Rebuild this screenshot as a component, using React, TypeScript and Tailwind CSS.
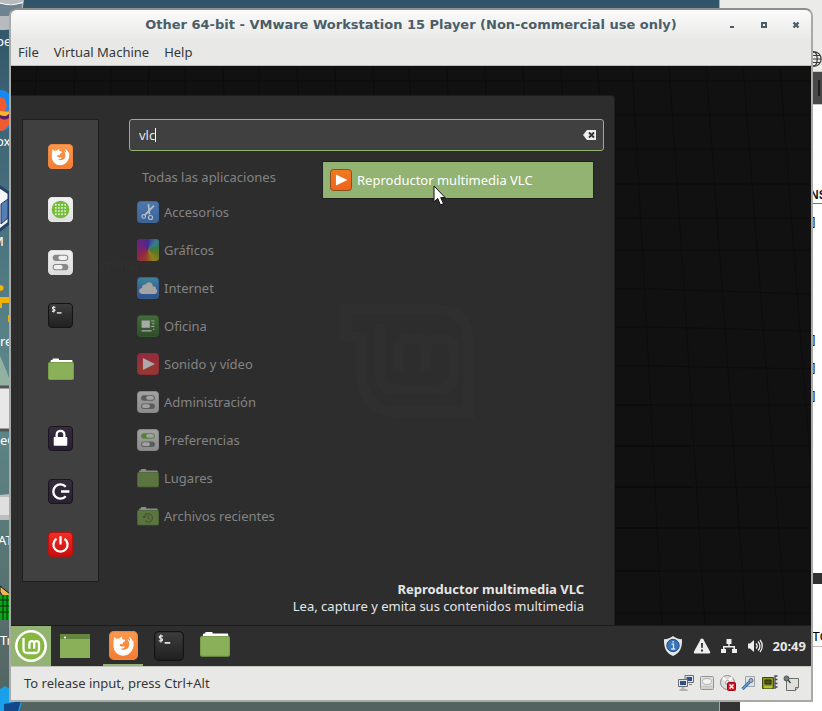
import type { ReactNode } from "react";

const uiFont = "font-['Noto_Sans',sans-serif]";

/* ---------- application icons ---------- */

type IconProps = { className?: string };

function Tile({ id, from, to, stroke, className, children }: { id: string; from: string; to: string; stroke: string; className?: string; children: ReactNode }) {
  return (
    <svg viewBox="0 0 24 24" className={className ?? "size-[25px]"} aria-hidden="true">
      <defs>
        <linearGradient id={id} x1="0" y1="0" x2="0" y2="1">
          <stop offset="0" stopColor={from} />
          <stop offset="1" stopColor={to} />
        </linearGradient>
      </defs>
      <rect x=".5" y=".5" width="23" height="23" rx="3.5" fill={`url(#${id})`} stroke={stroke} />
      {children}
    </svg>
  );
}

function Firefox({ className }: IconProps) {
  return (
    <Tile id="ffx" from="#fb9a4f" to="#f47c31" stroke="#ee8541" className={className}>
      <path
        d="M4.600 4.800L6 6.600C6.800 6.200 7.800 6.100 8.600 6.400 9.200 5.500 10 4.900 11 4.600 10.600 5.500 10.700 6.500 11.400 7L13.200 7.300C13.500 8.200 12.700 8.800 11.600 9.400L11.300 10.900 9.600 10.600C8.700 10.900 8.600 11.800 9.400 12.500 10.500 13.300 11.800 12.500 13.200 13.100 12.300 14.600 10.700 15 9.300 14.600 11.500 16.300 14.700 15.700 16.100 13.500 17.300 11.500 16.900 8.600 15.200 6.600 16.200 7 16.900 7.600 17.400 8.400 17.500 6.800 17 5.600 16.200 4.600 18 5.500 19 6.800 19.500 8.400L19.900 7.500C21.800 13.600 18.200 20.400 12 20.400 7.200 20.400 3.700 16.800 3.700 12.200 3.700 9.500 3.900 6.900 4.600 4.800Z"
        fill="#fff"
      />
    </Tile>
  );
}

function SoftwareGrid({ className }: IconProps) {
  return (
    <Tile id="soft" from="#f3f3f3" to="#dfdfdf" stroke="#e8e8e8" className={className}>
      <circle cx="12" cy="12" r="8.500" fill="#74bd3b" />
      {[7.5, 10.5, 13.5, 16.5].map((x) =>
        [7.5, 10.5, 13.5, 16.5].map((y) => <rect key={`${x}-${y}`} x={x - 0.8} y={y - 0.8} width="1.600" height="1.600" fill="#e6f5d7" />),
      )}
    </Tile>
  );
}

function Toggles({ className, id, from, to, pill, top }: { className?: string; id: string; from: string; to: string; pill: string; top: string }) {
  return (
    <Tile id={id} from={from} to={to} stroke={to} className={className}>
      <rect x="4.500" y="4.500" width="15" height="6" rx="3" fill={top} />
      <rect x="10" y="5.500" width="8.500" height="4" rx="2" fill={from} />
      <rect x="4.500" y="13.500" width="15" height="6" rx="3" fill={pill} />
      <rect x="5.500" y="14.500" width="8.500" height="4" rx="2" fill={from} />
    </Tile>
  );
}

function Terminal({ className }: IconProps) {
  return (
    <Tile id="term" from="#3d3d3d" to="#202020" stroke="#141414" className={className}>
      <path d="M5.500 2.800v6.400M7.200 4.100c-3.600-1-3.600 1.700-1.700 1.900 2 .3 1.800 2.700-1.700 1.800" fill="none" stroke="#e8e8e8" strokeWidth="1" />
      <path d="M8.500 9.500h4.500" stroke="#fff" strokeWidth="1.200" />
    </Tile>
  );
}

function Folder({ className, dim, recent }: { className?: string; dim?: boolean; recent?: boolean }) {
  return (
    <svg viewBox="0 0 26 24" className={className ?? "h-6 w-[26px]"} aria-hidden="true">
      <path d="M2.500 6V4.200C2.500 3.500 3 3 3.700 3H4.500V2.500c0-.6.4-1 1-1H10c.6 0 1 .4 1 1V3h12.500c.6 0 1 .4 1 1V7H2.500z" fill={dim ? "#8a8a8a" : "#fff"} />
      <rect x=".5" y="5.500" width="25" height="17" rx="1.200" fill={dim ? "#5b7440" : "#8bb05a"} stroke={dim ? "#4d6536" : "#7a9f4c"} />
      {recent && (
        <g fill="none" stroke="#425730" strokeWidth="1.300">
          <path d="M8.300 13.500a5 5 0 1 1 1.200 4M6.500 12l1.800 2 2-1.600M13 11.500v3l2.300 1.200" />
        </g>
      )}
    </svg>
  );
}

function Lock() {
  return (
    <Tile id="lock" from="#352d3d" to="#292131" stroke="#1a151f">
      <rect x="5.500" y="10.500" width="13" height="8.500" rx=".8" fill="#fff" />
      <path d="M8.300 11V8.300a3.700 3.700 0 0 1 7.400 0V11" fill="none" stroke="#fff" strokeWidth="2.200" />
    </Tile>
  );
}

function Logout() {
  return (
    <Tile id="logout" from="#352d3d" to="#292131" stroke="#1a151f">
      <path d="M17 7.500a6.800 6.800 0 1 0 0 9M12.500 12H20.500" fill="none" stroke="#fff" strokeWidth="2.300" />
    </Tile>
  );
}

function Power() {
  return (
    <Tile id="power" from="#ef3128" to="#cb0b0b" stroke="#bd1111">
      <path d="M8.200 6.500a6.800 6.800 0 1 0 7.600 0M12 4v8" fill="none" stroke="#fff" strokeWidth="2.200" />
    </Tile>
  );
}

function Scissors() {
  return (
    <Tile id="acc" from="#4c78ae" to="#3c6397" stroke="#41699c" className="size-[22px]">
      <g fill="none" stroke="#b5bcc4" strokeWidth="1.300">
        <path d="M12.500 3.500L13.600 14.500M18.500 5L8.500 15.500" strokeWidth="1.900" />
        <circle cx="7.300" cy="16.800" r="2" />
        <circle cx="14.800" cy="18" r="2.200" />
      </g>
    </Tile>
  );
}

function Graphics() {
  return (
    <span
      className="block size-[22px] rounded-[3px] bg-[conic-gradient(from_0deg,#432b8c,#377c92_12%,#397a42_22%,#667722_32%,#92801d_42%,#963b28_54%,#8b244e_68%,#6b2480_86%,#432b8c)]"
      aria-hidden="true"
    />
  );
}

function Cloud() {
  return (
    <Tile id="net" from="#3e8398" to="#314d91" stroke="#386493" className="size-[22px]">
      <path d="M6 18.500c-4.700 0-4.700-6.200-.5-6.500-.4-3 1.800-4.300 4-3.700 1.600-4.500 8-2.800 7.700 1.700 2.400-.1 3.700 1.200 3.500 2.700 2.300 1.600 1.600 5.800-2 5.800z" fill="#a4a4a4" />
    </Tile>
  );
}

function Office() {
  return (
    <Tile id="office" from="#416c39" to="#304c2a" stroke="#365a2f" className="size-[22px]">
      <path d="M5 6h9v8H5zM5 16.500h11V18H5zM15.500 6H19v1.200h-3.500zM16.500 9H19v1.200h-2.500zM15.500 12H19v1.200h-3.500zM17.500 15H19v1.200h-1.500z" fill="#aaa" />
    </Tile>
  );
}

function Media() {
  return (
    <Tile id="media" from="#97293f" to="#953a2c" stroke="#912f39" className="size-[22px]">
      <path d="M6.500 5.500l13 6.500-13 6.500z" fill="#aaa" />
    </Tile>
  );
}

function Vlc() {
  return (
    <Tile id="vlc" from="#ef7b21" to="#ee631a" stroke="#82451b" className="size-[22px]">
      <path d="M6.500 6l12.500 6-12.500 6z" fill="#fff" />
    </Tile>
  );
}

function MintLogo() {
  return (
    <svg viewBox="0 0 32 32" className="size-8" aria-hidden="true">
      <circle cx="16" cy="16" r="16" fill="#fff" />
      <circle cx="16" cy="16" r="13.400" fill="#86b83f" />
      <path d="M8.500 8v11c0 2.600 1.400 4 4 4h7.500c2.600 0 4-1.400 4-4v-5.200c0-1.600-1-2.600-2.400-2.600s-2.400 1-2.400 2.600v5v-5c0-1.600-1-2.600-2.400-2.600s-2.400 1-2.400 2.600v5" fill="none" stroke="#fff" strokeWidth="2.300" />
    </svg>
  );
}

function ShowDesktop() {
  return (
    <svg viewBox="0 0 30 24" className="h-6 w-[30px]" aria-hidden="true">
      <rect width="30" height="24" fill="#8bb05a" />
      <rect width="30" height="5" fill="#64863f" />
      <circle cx="5" cy="3.500" r="1.100" fill="#fff" />
    </svg>
  );
}

/* ---------- tray and status icons ---------- */

function Shield() {
  return (
    <svg viewBox="0 0 20 22" className="h-[22px] w-5" aria-hidden="true">
      <path d="M10 1c2.400 2 5.200 3 9 3.200C19.300 12 17.300 18 10 21 2.700 18 .7 12 1 4.200 4.800 4 7.600 3 10 1z" fill="#e4e7e9" />
      <circle cx="10" cy="10.500" r="6.200" fill="#3874b8" stroke="#234f86" />
      <path d="M8.500 9.200h2v4.600M8.200 14h4M9.200 6.800h1.800" fill="none" stroke="#d2e6f8" strokeWidth="1.300" />
    </svg>
  );
}

function Warning() {
  return (
    <svg viewBox="0 0 18 16" className="h-4 w-[18px]" aria-hidden="true">
      <path d="M9 .5c.6 0 1 .3 1.300.8l6.800 12.500c.4.9 0 1.700-1 1.700H1.900c-1 0-1.400-.8-1-1.700L7.700 1.300C8 .8 8.400.500 9 .5z" fill="#eee" />
      <path d="M8 5h2l-.3 5H8.300zM8 11.500h2v2H8z" fill="#303030" />
    </svg>
  );
}

function Network() {
  return (
    <svg viewBox="0 0 16 16" className="size-4" aria-hidden="true">
      <path d="M5.500 1h5v5H8.700v2H14v3h2v4h-5v-4h1.500V9.500h-9V11H5v4H0v-4h2V8h5.300V6H5.500z" fill="#eee" />
    </svg>
  );
}

function Volume() {
  return (
    <svg viewBox="0 0 16 16" className="size-4" aria-hidden="true">
      <path d="M1 5.500h2L7 2v12l-4-3.500H1z" fill="#eee" />
      <path d="M9 5.500c1.400 1.500 1.400 3.500 0 5M11 3.500c2.600 2.600 2.600 6.400 0 9M13 2c3 3.500 3 8.500 0 12" fill="none" stroke="#eee" strokeWidth="1.300" />
    </svg>
  );
}

function Monitors() {
  return (
    <svg viewBox="0 0 16 16" className="size-4" aria-hidden="true">
      <path d="M7 .5h8.500v7H7z" fill="#e2e4e6" stroke="#6a6e74" />
      <path d="M8.500 2H14v4H8.500z" fill="#2f4f86" />
      <path d="M.5 4.500h9v7h-9z" fill="#e2e4e6" stroke="#6a6e74" />
      <path d="M2 6h6v4H2z" fill="#2f4f86" />
      <path d="M11 9.500h3M3.500 13h3M1.500 15h8" fill="none" stroke="#7c8085" strokeWidth="1.200" />
    </svg>
  );
}

function HardDisk() {
  return (
    <svg viewBox="0 0 16 16" className="size-4" aria-hidden="true">
      <rect x="1.500" y="1.500" width="13" height="13" rx="1" fill="#dededb" stroke="#93948f" />
      <ellipse cx="8" cy="6.500" rx="4.500" ry="3" fill="#f2f2f0" stroke="#b3b3ae" />
      <path d="M2.500 11.500h11M2.500 13h11" stroke="#c4c4be" />
    </svg>
  );
}

function DiscError() {
  return (
    <svg viewBox="0 0 16 16" className="size-4" aria-hidden="true">
      <circle cx="7.500" cy="7.500" r="7" fill="#dcdcda" stroke="#8b8b8b" />
      <path d="M7.500 7.500L3 2.500M7.500 7.500L12 2" stroke="#fff" strokeWidth="2" />
      <circle cx="7.500" cy="7.500" r="2" fill="#fff" stroke="#999" />
      <rect x="7.500" y="7.500" width="8" height="8" rx="1" fill="#cf1524" stroke="#a00914" />
      <path d="M9.500 9.500l4 4M13.500 9.500l-4 4" stroke="#fff" strokeWidth="1.500" />
    </svg>
  );
}

function Usb() {
  return (
    <svg viewBox="0 0 16 16" className="size-4" aria-hidden="true">
      <path d="M4.500 1.500h9v10h-9z" fill="#dfe3e7" stroke="#9fa5aa" />
      <circle cx="10" cy="5.500" r="2" fill="#9eb3cc" stroke="#5b6f88" />
      <path d="M1.500 14l7-7" stroke="#2c5c9b" strokeWidth="3" />
      <path d="M1.500 14l7-7" stroke="#6ca1db" strokeWidth="1.500" />
    </svg>
  );
}

function SoundCard() {
  return (
    <svg viewBox="0 0 16 16" className="size-4" aria-hidden="true">
      <path d="M.5 2.500h11v11H.5z" fill="#8c981c" stroke="#404915" />
      <path d="M3 5h6v4H3z" fill="#4a5320" stroke="#252b12" />
      <path d="M3 11v2.500M5 11v2.500M7 11v2.500M9 11v2.500" stroke="#dce94c" />
      <path d="M15.500 1H13v13M13 4.500h2.500M13 8.500h2.500M13 12h2.500" fill="none" stroke="#45484a" strokeWidth="1.300" />
    </svg>
  );
}

function Note() {
  return (
    <svg viewBox="0 0 16 16" className="size-4" aria-hidden="true">
      <path d="M3.500 3.500h12v9l-3 3h-9z" fill="#dfe0dc" stroke="#6b6e69" />
      <path d="M12.500 15.500v-3h3" fill="#bbbdb8" stroke="#6b6e69" />
      <circle cx="3.500" cy="3.500" r="2.500" fill="#737b7c" stroke="#4c5352" />
      <path d="M5 5l2.500 3" stroke="#434948" strokeWidth="1.500" />
    </svg>
  );
}

/* ---------- host desktop behind the window ---------- */

function HostDesktop() {
  return (
    <div className="absolute inset-0 overflow-hidden bg-linear-to-b from-[#315469] via-[#5e898c] via-55% to-[#53635f]" aria-hidden="true">
      <svg className="absolute top-0 left-0 h-[711px] w-6" viewBox="0 0 24 711">
        <path d="M0 0h24l-4 26c-1 3-8 4-20 4z" fill="#b7bbbd" />
        <path d="M0 4h22l-1 12H0z" fill="#6e8290" />
        <path d="M0 3q12 4 23-1" stroke="#fff" fill="none" />
        <path d="M0 90c8-1 13 7 14 20s-5 21-14 21z" fill="#1788ec" />
        <path d="M0 97l5 2 2 8-3 5 6-2v12c-2 6-6 9-10 9z" fill="#f05a31" />
        <path d="M0 111l10 1-3 5H0z" fill="#fbb52b" />
        <path d="M0 115c4 2 7 1 9-1v4c-3 2-6 2-9 0z" fill="#56206e" />
        <path d="M-6 194l6-7 9 6v30l-9 7-7-4z" fill="#f3f5f6" stroke="#24416c" strokeWidth="3" />
        <path d="M1 204l7-5v19l-7 6z" fill="#557eb6" stroke="#203963" />
        <path d="M0 285c5 0 5 6 0 6zM0 297h9v6H2v5H0zM8 315h4v7H8z" fill="#f3b006" />
        <path d="M0 356q7 15 12 30H0z" fill="#92b1a1" />
        <path d="M-4 387h18v43H-4z" fill="#e8e8e8" stroke="#505457" strokeWidth="3" />
        <path d="M0 495l10-1v26H0z" fill="#bdbdbd" />
        <path d="M0 497h9v18H0z" fill="#dfdfdf" />
        <path d="M0 586l10 8v12L0 592z" fill="#edb84c" stroke="#111" />
        <path d="M0 595h10v25H0z" fill="#09a714" />
        <path d="M3 595v25M7 595v25M0 600h10M0 606h10M0 612h10" stroke="#102716" />
        <path d="M0 689l5-3 5 3v10l12 4-3 8H0z" fill="#1aa0e9" />
        <path d="M4 704l17-3-3 10H4z" fill="#12488a" />
      </svg>
      <div className="absolute top-0 left-0 w-2.5 overflow-hidden text-[13px] leading-4 text-white">
        <div className="-ml-1 flex flex-col">
          <span className="mt-[33px]">pe</span>
          <span className="mt-[84px]">ox</span>
          <span className="mt-[84px] -ml-1">M</span>
          <span className="mt-[84px] ml-1">re</span>
          <span className="mt-[83px] ml-1">eC</span>
          <span className="mt-[84px] ml-0.5">AT</span>
          <span className="mt-[84px] ml-1">Tr</span>
        </div>
      </div>
      <div className="absolute inset-y-0 right-0 flex w-[103px] flex-col border-l border-[#a2aaae] bg-white">
        <div className="h-[71px] bg-[#ebebea]">
          <svg className="absolute top-[51px] right-0 size-4" viewBox="0 0 16 16">
            <g fill="none" stroke="#3b3b3b" strokeWidth="1.200">
              <circle cx="8" cy="8" r="7.200" />
              <ellipse cx="8" cy="8" rx="3.200" ry="7.200" />
              <path d="M1 8h14M2 4.500h12M2 11.500h12" />
            </g>
          </svg>
        </div>
        <div className="flex h-[34px] justify-end border-y border-[#c8c8c8] bg-[#484848] py-2 pr-0.5">
          <span className="w-0.5 bg-[#202020]" />
        </div>
        <div className="flex h-[468px] flex-col items-end overflow-hidden font-['DejaVu_Sans_Mono',monospace] text-[12px] leading-4 text-[#151515]">
          <span className="mt-[82px] w-3 overflow-hidden border-b border-[#777] font-['Liberation_Sans',sans-serif] font-bold">NS</span>
          <span className="mt-[11px] w-3">]</span>
          <span className="mt-[102px] w-3">]</span>
          <span className="mt-3 w-3">]</span>
          <span className="mt-3 w-3">]</span>
        </div>
        <div className="h-[11px] bg-[#303030]" />
        <div className="flex h-[63px] justify-end border-b border-[#bbb]">
          <span className="mt-[45px] w-2.5 overflow-hidden font-['Liberation_Sans',sans-serif] text-[13px] leading-4">TO</span>
        </div>
        <div className="flex flex-1 items-end">
          <span className="h-3 w-5 bg-[#333]" />
        </div>
      </div>
    </div>
  );
}

/* ---------- guest wallpaper ---------- */

function Wallpaper() {
  return (
    <svg className="absolute inset-0 size-full" viewBox="0 0 800 600" preserveAspectRatio="none" aria-hidden="true">
      <rect width="800" height="600" fill="#111" />
      <g stroke="#0d0d0d" fill="none">
        <path d="M0 15h800M604 49h196M604 83h196M604 118h196M604 152h196M604 184h196M604 223h38l158 5M604 261h38l158 4M604 300h38l158 3M604 339h196M604 380h196M604 421h196M604 462h196M604 505h196M604 547h196" />
        <path d="M26 0l-2 30M64 0l-1 30M100 0v30M138 0l-1 30M174 0v30M212 0l1 30M248 0v30M286 0l1 30M324 0l1 30M362 0l1 30M398 0l1 30M436 0l1 30M474 0l1 30M512 0l1 30M550 0l1 30M586 0l3 30M621 0q15 260 30 560M658 0q18 260 36 560M695 0q19 260 40 560M732 0q20 260 43 560M769 0q16 220 31 400" />
      </g>
      <path d="M604 339h38M604 380h76M604 421h78M604 462h43M604 505h46" stroke="#080808" />
    </svg>
  );
}

/* ---------- data ---------- */

const favourites = [
  { name: "Firefox", icon: <Firefox /> },
  { name: "Gestor de software", icon: <SoftwareGrid /> },
  { name: "Configuración", icon: <Toggles id="conf" from="#f0f0f0" to="#dcdcdc" pill="#888" top="#888" /> },
  { name: "Terminal", icon: <Terminal /> },
  { name: "Archivos", icon: <Folder /> },
];

const session = [
  { name: "Bloquear", icon: <Lock /> },
  { name: "Cerrar sesión", icon: <Logout /> },
  { name: "Apagar", icon: <Power /> },
];

const categories = [
  { name: "Accesorios", icon: <Scissors /> },
  { name: "Gráficos", icon: <Graphics /> },
  { name: "Internet", icon: <Cloud /> },
  { name: "Oficina", icon: <Office /> },
  { name: "Sonido y vídeo", icon: <Media /> },
  { name: "Administración", icon: <Toggles id="adm" from="#a2a2a2" to="#8c8c8c" pill="#5c5c5c" top="#5c5c5c" className="size-[22px]" /> },
  { name: "Preferencias", icon: <Toggles id="pref" from="#a2a2a2" to="#8c8c8c" pill="#5c5c5c" top="#528334" className="size-[22px]" /> },
  { name: "Lugares", icon: <Folder dim className="size-[22px]" /> },
  { name: "Archivos recientes", icon: <Folder dim recent className="size-[22px]" /> },
];

function StartMenu() {
  return (
    <section className="relative flex h-[530px] w-[604px] rounded-tr-sm border-t border-r border-[#1f1f1f] bg-[#2d2d2d] pt-[23px] pr-2.5 pl-[11px]">
      <svg className="absolute top-[208px] left-[329px] h-[115px] w-[135px]" viewBox="0 0 135 115" aria-hidden="true">
        <path d="M0 0h98q36 3 36 38v77H58q-40-4-42-44V38H0z" fill="#2f2f2f" />
        <path d="M12 10h82q29 2 29 30v63H60q-33-2-33-34V28H12z" fill="#2d2d2d" />
        <path d="M40 20v48q0 18 18 18h38q18 0 18-18V48q0-14-14-14T86 48v20V48q0-14-14-14T58 48v20" fill="none" stroke="#2f2f2f" strokeWidth="11" />
      </svg>
      <span className="absolute top-[161px] left-[89px] text-[13px] leading-4 text-[#313131]" aria-hidden="true">rsonal</span>

      <nav aria-label="Favoritos" className="relative flex h-[463px] w-[77px] flex-col items-center gap-7 border border-[#1f1f1f] bg-[#404040] pt-6">
        {favourites.map((f) => (
          <button key={f.name} aria-label={f.name} className="flex h-[25px] items-center">
            {f.icon}
          </button>
        ))}
        <div className="flex flex-col gap-7 pt-[17px]">
          {session.map((s) => (
            <button key={s.name} aria-label={s.name} className="flex h-[25px] items-center">
              {s.icon}
            </button>
          ))}
        </div>
      </nav>

      <div className="relative flex flex-1 flex-col pl-[30px]">
        <div className="flex h-8 items-center rounded-[3px] border border-[#92b372] bg-[#404040] pr-1.5 pl-[9px]">
          <input aria-label="Buscar" defaultValue="vlc" className="field-sizing-content text-[13px] leading-5 text-[#e6e6e6] outline-none" />
          <span className="h-3.5 w-px bg-white" />
          <button aria-label="Borrar búsqueda" className="ml-auto">
            <svg viewBox="0 0 14 12" className="h-3 w-3.5" aria-hidden="true">
              <path d="M4 1h9v10H4L0 6z" fill="#eee" />
              <path d="M6 3.500l5 5M11 3.500l-5 5" stroke="#333" strokeWidth="1.800" />
            </svg>
          </button>
        </div>

        <div className="flex flex-1 items-start pt-2.5">
          <div className="flex w-[193px] flex-col pl-2 text-[13px] leading-4 text-[#848484]">
            <button className="flex h-8 items-center pl-[5px]">Todas las aplicaciones</button>
            {categories.map((c) => (
              <button key={c.name} className="flex h-[38px] items-center gap-[5px]">
                {c.icon}
                {c.name}
              </button>
            ))}
          </div>
          <button className="flex h-[38px] w-[272px] items-center gap-[5px] border border-[#202020] bg-[#92b372] pl-[7px] text-[13px] leading-4 text-white">
            <Vlc />
            Reproductor multimedia VLC
          </button>
        </div>

        <div className="pr-5 pb-2.5 text-right text-[13px] leading-[17px] text-[#e6e6e6]">
          <p className="font-bold">Reproductor multimedia VLC</p>
          <p>Lea, capture y emita sus contenidos multimedia</p>
        </div>
      </div>
    </section>
  );
}

function Taskbar() {
  return (
    <footer className="relative flex h-[41px] border-t border-[#1c1c1c] bg-[#2e2e2e]">
      <button aria-label="Menú" className="flex w-10 items-center justify-center bg-[#92b372]">
        <MintLogo />
      </button>
      <div className="flex items-center pl-[9px]">
        <button aria-label="Mostrar escritorio" className="flex w-[30px] justify-center">
          <ShowDesktop />
        </button>
        <button aria-label="Firefox" className="ml-[13px] flex h-10 w-10 items-center justify-center border-b-2 border-[#92b372]">
          <Firefox className="size-[29px]" />
        </button>
        <button aria-label="Terminal" className="ml-[11px]">
          <Terminal className="size-[30px]" />
        </button>
        <button aria-label="Archivos" className="ml-4 pb-1">
          <Folder className="h-7 w-[30px]" />
        </button>
      </div>
      <div className="ml-auto flex items-center gap-2.5 pr-[5px]">
        <Shield />
        <Warning />
        <Network />
        <Volume />
        <time className="text-[13px] leading-4 font-bold text-[#e8e8e8]">20:49</time>
      </div>
    </footer>
  );
}

export default function App() {
  return (
    <main className={`relative min-h-screen overflow-hidden pt-2 pr-[9px] pb-[9px] pl-[9px] ${uiFont}`}>
      <HostDesktop />

      <div className="relative flex flex-col rounded-t-lg border-2 border-[#a9a9a6] border-t-[#8e8e8c] bg-[#e8e8e6]">
        <header className="relative flex h-[29px] items-center justify-center rounded-t-md bg-linear-to-b from-[#fbfbfb] to-[#e9e9e8]">
          <h1 className="font-['DejaVu_Sans',sans-serif] text-[13px] leading-4 font-bold text-[#4b5e68]">
            Other 64-bit - VMware Workstation 15 Player (Non-commercial use only)
          </h1>
          <div className="absolute inset-y-0 right-[11px] flex items-center gap-6 text-[#4b5e68]">
            <button aria-label="Minimizar">
              <svg viewBox="0 0 8 8" className="size-2" aria-hidden="true"><path d="M2 5h4v2H2z" fill="currentColor" /></svg>
            </button>
            <button aria-label="Maximizar">
              <svg viewBox="0 0 8 8" className="size-2" aria-hidden="true"><path d="M2 2h4v4H2z" fill="none" stroke="currentColor" strokeWidth="2" /></svg>
            </button>
            <button aria-label="Cerrar">
              <svg viewBox="0 0 8 8" className="size-2" aria-hidden="true"><path d="M1.500 1.500l5 5M6.500 1.500l-5 5" stroke="currentColor" strokeWidth="2.400" /></svg>
            </button>
          </div>
        </header>

        <nav aria-label="Menu" className="flex h-[27px] items-center gap-[15px] border-b border-[#bdbdba] pl-[7px] text-[13px] leading-4 text-[#33383b]">
          <button>File</button>
          <button>Virtual Machine</button>
          <button>Help</button>
        </nav>

        <div className="relative flex flex-col bg-[#111]">
          <Wallpaper />
          <div className="pt-[29px]">
            <StartMenu />
          </div>
          <Taskbar />
          <svg className="absolute top-[119px] left-[422px] h-[21px] w-[13px]" viewBox="0 0 13 21" aria-hidden="true">
            <path d="M1 1v16l3.700-3.500L7.500 20l3-1.400-2.800-6h4.500z" fill="#fff" stroke="#111" />
          </svg>
        </div>

        <div className="flex h-[34px] items-center justify-between border-t border-[#c4c4c0] pr-3 pb-0.5 pl-[13px] text-[13px] leading-4 text-[#33383b]">
          <p>To release input, press Ctrl+Alt</p>
          <div className="flex items-center gap-[5px]">
            <Monitors />
            <HardDisk />
            <DiscError />
            <Usb />
            <SoundCard />
            <Note />
          </div>
        </div>
      </div>
    </main>
  );
}
